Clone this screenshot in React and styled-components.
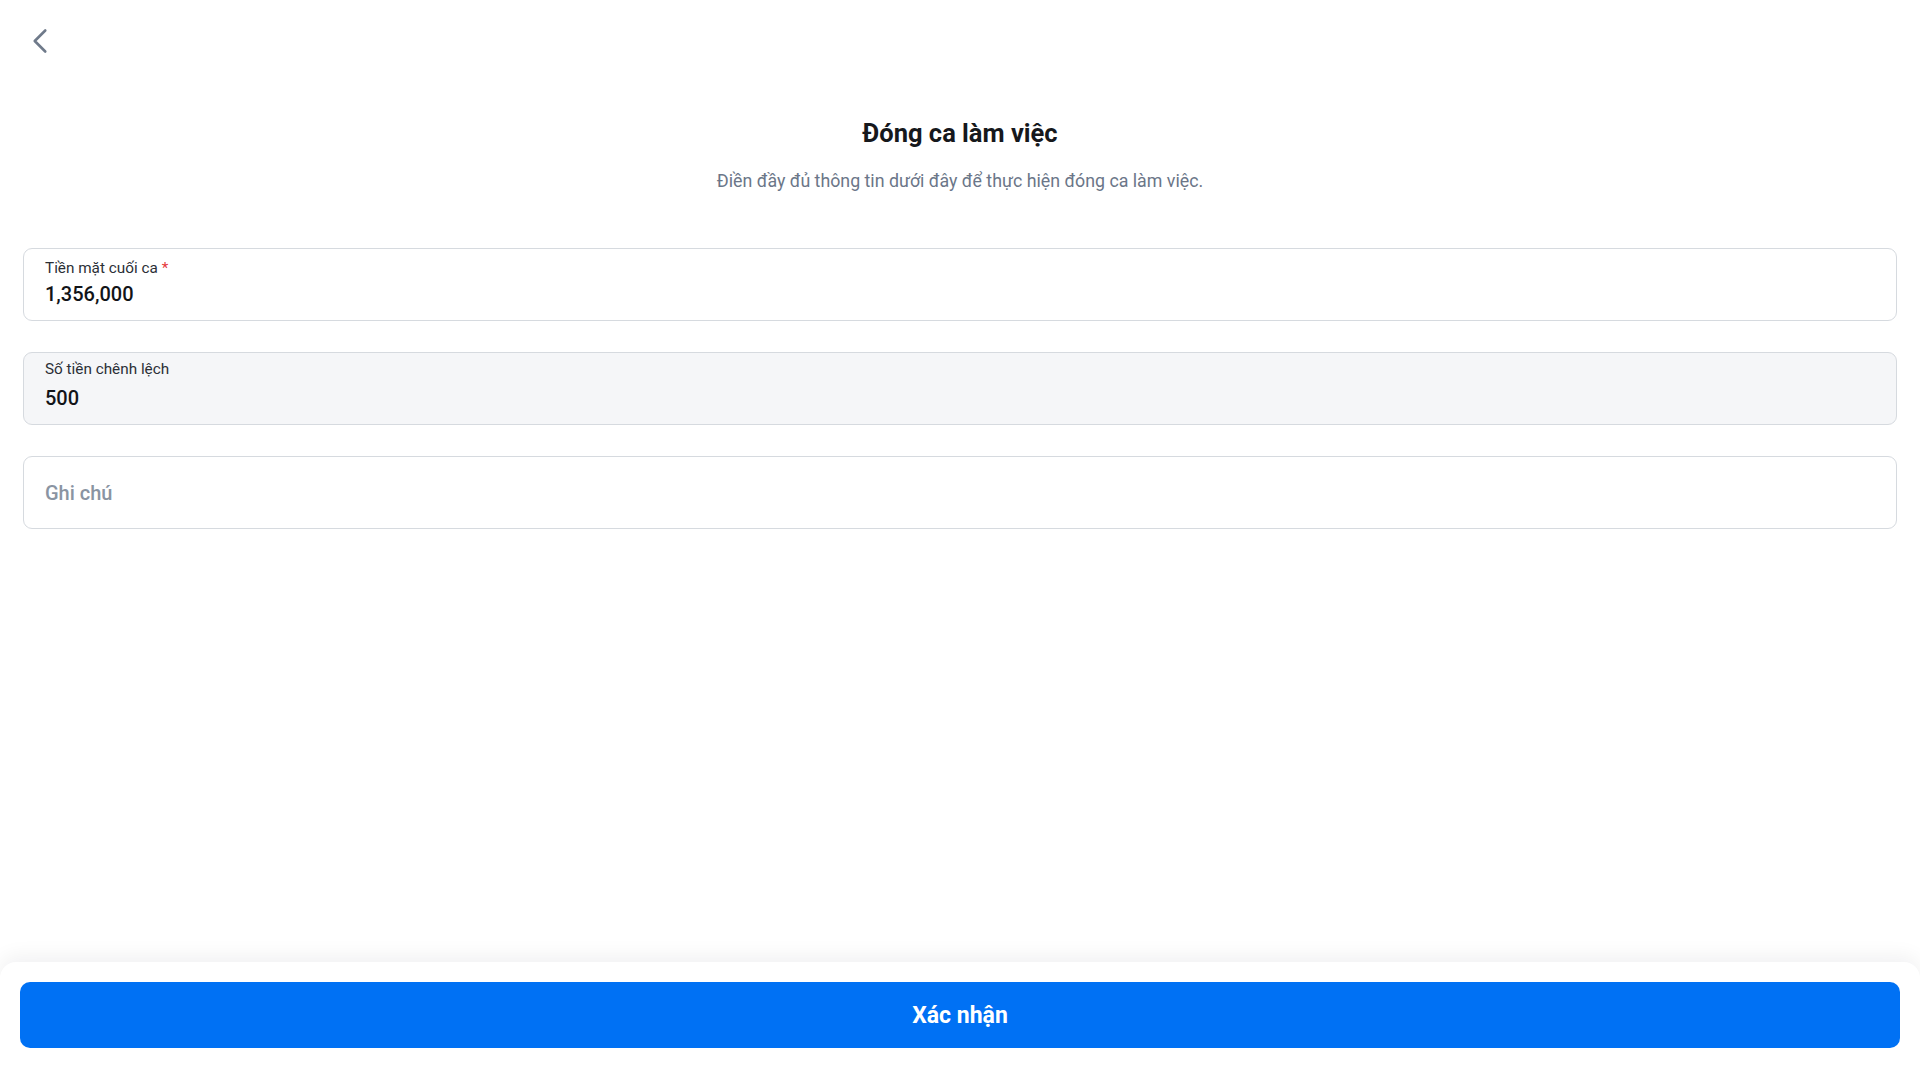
import { useState } from "react";
import styled, { createGlobalStyle } from "styled-components";
import { ChevronLeft } from "lucide-react";

const GlobalStyle = createGlobalStyle`
  * {
    box-sizing: border-box;
  }

  body {
    margin: 0;
    background: #ffffff;
    font-family: Roboto, "Noto Sans", "Liberation Sans", sans-serif;
    color: #111418;
  }
`;

const Page = styled.div`
  min-height: 100vh;
  display: flex;
  flex-direction: column;
  background: #ffffff;
`;

const BackButton = styled.button`
  width: 42px;
  height: 42px;
  margin: 20px 0 0 19px;
  padding: 0;
  border: none;
  background: transparent;
  color: #6f7a8a;
  cursor: pointer;
  display: flex;
  align-items: center;
  justify-content: center;
`;

const Header = styled.header`
  margin-top: 55px;
  text-align: center;
`;

const Title = styled.h1`
  margin: 0;
  font-size: 25.5px;
  line-height: 32px;
  font-weight: 700;
  color: #16181c;
`;

const Subtitle = styled.p`
  margin: 20px 0 0;
  font-size: 17.8px;
  line-height: 24px;
  font-weight: 400;
  color: #6b7688;
`;

const Form = styled.div`
  margin-top: 55px;
  padding: 0 23px;
  display: flex;
  flex-direction: column;
  gap: 31px;
`;

// read-only fields sit their label a little higher
const Field = styled.label`
  height: 73px;
  display: flex;
  flex-direction: column;
  justify-content: ${(p) => (p.$empty ? "center" : "flex-start")};
  padding: ${(p) =>
    p.$empty ? "0 21px" : p.$readOnly ? "6px 21px 0" : "9px 21px 0"};
  border: 1px solid #d6dadf;
  border-radius: 9px;
  background: ${(p) => (p.$readOnly ? "#f5f6f8" : "#ffffff")};
`;

const Label = styled.span`
  font-size: 15.3px;
  line-height: 20px;
  color: #2b2f36;
`;

const Required = styled.span`
  margin-left: 4px;
  color: #e5383b;
`;

const Input = styled.input`
  margin-top: ${(p) => p.$gap ?? 3}px;
  width: 100%;
  padding: 0;
  border: none;
  outline: none;
  background: transparent;
  font-family: inherit;
  font-size: 20px;
  line-height: 26px;
  font-weight: 500;
  color: #121418;

  &::placeholder {
    color: #8a94a2;
    font-weight: 500;
  }
`;

const Footer = styled.footer`
  margin-top: auto;
  padding: 20px 20px 32px;
  background: #ffffff;
  border-radius: 16px 16px 0 0;
  box-shadow: 0 -6px 20px rgba(16, 24, 40, 0.06);
`;

const SubmitButton = styled.button`
  width: 100%;
  height: 66px;
  border: none;
  border-radius: 10px;
  background: #0071f4;
  color: #ffffff;
  font-family: inherit;
  font-size: 23px;
  font-weight: 700;
  cursor: pointer;
`;

export default function App() {
  const [cash, setCash] = useState("1,356,000");
  const [note, setNote] = useState("");

  return (
    <Page>
      <GlobalStyle />
      <BackButton aria-label="Quay lại">
        <ChevronLeft size={42} strokeWidth={1.5} />
      </BackButton>

      <Header>
        <Title>Đóng ca làm việc</Title>
        <Subtitle>
          Điền đầy đủ thông tin dưới đây để thực hiện đóng ca làm việc.
        </Subtitle>
      </Header>

      <Form>
        <Field>
          <Label>
            Tiền mặt cuối ca<Required>*</Required>
          </Label>
          <Input value={cash} onChange={(e) => setCash(e.target.value)} />
        </Field>

        <Field $readOnly>
          <Label>Số tiền chênh lệch</Label>
          <Input $gap={6} value="500" readOnly />
        </Field>

        <Field $empty>
          <Input
            $gap={0}
            placeholder="Ghi chú"
            value={note}
            onChange={(e) => setNote(e.target.value)}
          />
        </Field>
      </Form>

      <Footer>
        <SubmitButton>Xác nhận</SubmitButton>
      </Footer>
    </Page>
  );
}
